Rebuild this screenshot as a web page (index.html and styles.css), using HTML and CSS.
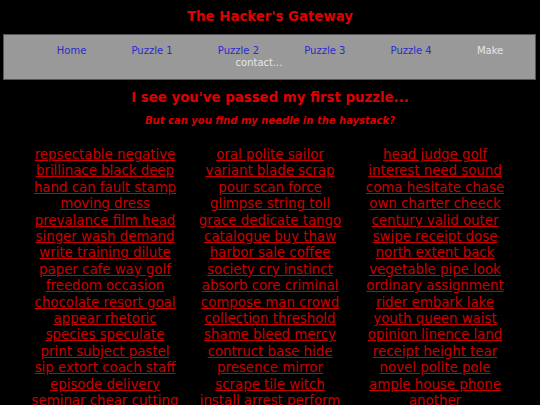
FILE: index.html
```html
<!DOCTYPE html>
<html>
<head>
<meta charset="utf-8">
<title>The Hacker's Gateway</title>
<link rel="stylesheet" href="styles.css">
</head>
<body>
<h1 class="title">The Hacker's Gateway</h1>
<div class="nav">
<a class="nav-link" href="#">Home</a> <a class="nav-link" href="#">Puzzle 1</a> <a class="nav-link" href="#">Puzzle 2</a> <a class="nav-link" href="#">Puzzle 3</a> <a class="nav-link" href="#">Puzzle 4</a> <a class="nav-link nav-contact" href="#">Make contact...</a>
</div>
<h2 class="heading">I see you've passed my first puzzle...</h2>
<p class="sub">But can you find my needle in the haystack?</p>
<div class="hay">
<div class="col">
<a href="#">repsectable negative</a>
<a href="#">brillinace black deep</a>
<a href="#">hand can fault stamp</a>
<a href="#">moving dress</a>
<a href="#">prevalance film head</a>
<a href="#">singer wash demand</a>
<a href="#">write training dilute</a>
<a href="#">paper cafe way golf</a>
<a href="#">freedom occasion</a>
<a href="#">chocolate resort goal</a>
<a href="#">appear rhetoric</a>
<a href="#">species speculate</a>
<a href="#">print subject pastel</a>
<a href="#">sip extort coach staff</a>
<a href="#">episode delivery</a>
<a href="#">seminar chear cutting</a>
<a href="#">legend option drawer</a>
</div>
<div class="col">
<a href="#">oral polite sailor</a>
<a href="#">variant blade scrap</a>
<a href="#">pour scan force</a>
<a href="#">glimpse string toll</a>
<a href="#">grace dedicate tango</a>
<a href="#">catalogue buy thaw</a>
<a href="#">harbor sale coffee</a>
<a href="#">society cry instinct</a>
<a href="#">absorb core criminal</a>
<a href="#">compose man crowd</a>
<a href="#">collection threshold</a>
<a href="#">shame bleed mercy</a>
<a href="#">contruct base hide</a>
<a href="#">presence mirror</a>
<a href="#">scrape tile witch</a>
<a href="#">install arrest perform</a>
<a href="#">margin bottle stroke</a>
</div>
<div class="col">
<a href="#">head judge golf</a>
<a href="#">interest need sound</a>
<a href="#">coma hesitate chase</a>
<a href="#">own charter cheeck</a>
<a href="#">century valid outer</a>
<a href="#">swipe receipt dose</a>
<a href="#">north extent back</a>
<a href="#">vegetable pipe look</a>
<a href="#">ordinary assignment</a>
<a href="#">rider embark lake</a>
<a href="#">youth queen waist</a>
<a href="#">opinion linence land</a>
<a href="#">receipt height tear</a>
<a href="#">novel polite pole</a>
<a href="#">ample house phone</a>
<a href="#">another</a>
<a href="#">pillow route stain</a>
</div>
</div>
</body>
</html>
```
FILE: styles.css
```css
html, body {
  margin: 0;
  padding: 0;
  background: #000;
}
body {
  font-family: "DejaVu Sans", Verdana, sans-serif;
  color: #cc0000;
  padding-top: 9px;
}
.title {
  margin: 0;
  font-size: 13.33px;
  font-weight: bold;
  text-align: center;
  color: #dd0000;
  line-height: 16px;
}
.nav {
  margin: 9px 4px 0 3px;
  background: #999999;
  border: 1px solid #555555;
  padding: 10px 0;
  text-align: center;
  font-size: 10px;
  line-height: 12px;
}
.nav-link {
  color: #2b2bcc;
  text-decoration: none;
  margin: 0 21px;
}
.nav-contact {
  color: #e6e6e6;
}
.heading {
  margin: 10px 0 0;
  font-size: 13.33px;
  font-weight: bold;
  text-align: center;
  line-height: 16px;
  color: #dd0000;
}
.sub {
  margin: 9px 0 0;
  font-size: 10px;
  font-weight: bold;
  font-style: italic;
  text-align: center;
  line-height: 12px;
  color: #dd0000;
}
.hay {
  margin-top: 20px;
  display: grid;
  grid-template-columns: 165px 165px 165px;
  justify-content: center;
}
.col {
  display: flex;
  flex-direction: column;
  align-items: center;
}
.col a {
  color: #c80000;
  font-size: 13.33px;
  line-height: 16.4px;
  text-decoration: underline;
  white-space: nowrap;
}
```
